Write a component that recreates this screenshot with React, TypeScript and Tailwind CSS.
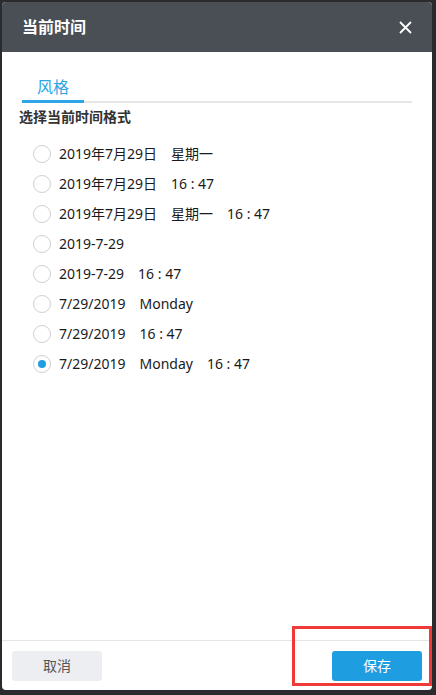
import React, { useState } from 'react';

const FONT = { fontFamily: '"Noto Sans", "Noto Sans CJK SC", sans-serif' };

const formats: string[][] = [
  ['2019年7月29日', '星期一'],
  ['2019年7月29日', '16 : 47'],
  ['2019年7月29日', '星期一', '16 : 47'],
  ['2019-7-29'],
  ['2019-7-29', '16 : 47'],
  ['7/29/2019', 'Monday'],
  ['7/29/2019', '16 : 47'],
  ['7/29/2019', 'Monday', '16 : 47'],
];

export default function App() {
  const [selected, setSelected] = useState(7);

  return (
    <div className="w-[436px] h-[695px] bg-[#2b2b2e] p-[2px] pr-[4px] pb-[5px] overflow-hidden" style={FONT}>
      <div className="relative w-[430px] h-[688px] bg-white rounded-[4px] flex flex-col overflow-hidden">
        {/* Header */}
        <div className="h-[50px] bg-[#4a4e55] flex items-center justify-between pl-[20px] pr-[20px] shrink-0">
          <h1 className="text-[16px] font-bold text-white leading-none">当前时间</h1>
          <button className="text-white">
            <svg width="13" height="13" viewBox="0 0 13 13" fill="none" stroke="currentColor" strokeWidth="1.8">
              <path d="M1 1L12 12M12 1L1 12" />
            </svg>
          </button>
        </div>

        {/* Body */}
        <div className="flex-1 flex flex-col">
          <div className="mx-[20px] mt-[25px] border-b-2 border-[#e6e6e6] flex">
            <div className="w-[62px] text-center text-[16px] text-[#2ea5e6] leading-[20px] pb-[3px] border-b-[3px] border-[#2ea5e6] -mb-[2px]">
              风格
            </div>
          </div>
          <div className="ml-[17px] mt-[4px] text-[14px] font-bold text-[#333] leading-[20px]">选择当前时间格式</div>

          <div className="mt-[12px] flex flex-col">
            {formats.map((parts, i) => (
              <label
                key={i}
                onClick={() => setSelected(i)}
                className="h-[30px] flex items-center pl-[31px] cursor-pointer"
              >
                <span className="w-[18px] h-[18px] rounded-full border border-[#d0d0d0] bg-white flex items-center justify-center shrink-0">
                  {selected === i && <span className="w-[8px] h-[8px] rounded-full bg-[#1e9de0]" />}
                </span>
                <span className="ml-[8px] flex gap-[14px] text-[14px] text-[#1a1a1a] leading-none">
                  {parts.map((p, j) => (
                    <span key={j}>{p}</span>
                  ))}
                </span>
              </label>
            ))}
          </div>
        </div>

        {/* Footer */}
        <div className="h-[50px] border-t border-[#e5e5e5] flex items-center justify-between px-[10px] shrink-0">
          <button className="w-[90px] h-[30px] rounded-[3px] bg-[#eceef1] text-[14px] text-[#555]">取消</button>
          <button className="w-[90px] h-[30px] rounded-[3px] bg-[#1e9de0] text-[14px] text-white">保存</button>
        </div>

        {/* annotation box */}
        <div className="absolute left-[290px] top-[624px] w-[140px] h-[60px] border-[3px] border-[#f03a3a] pointer-events-none" />
      </div>
    </div>
  );
}
